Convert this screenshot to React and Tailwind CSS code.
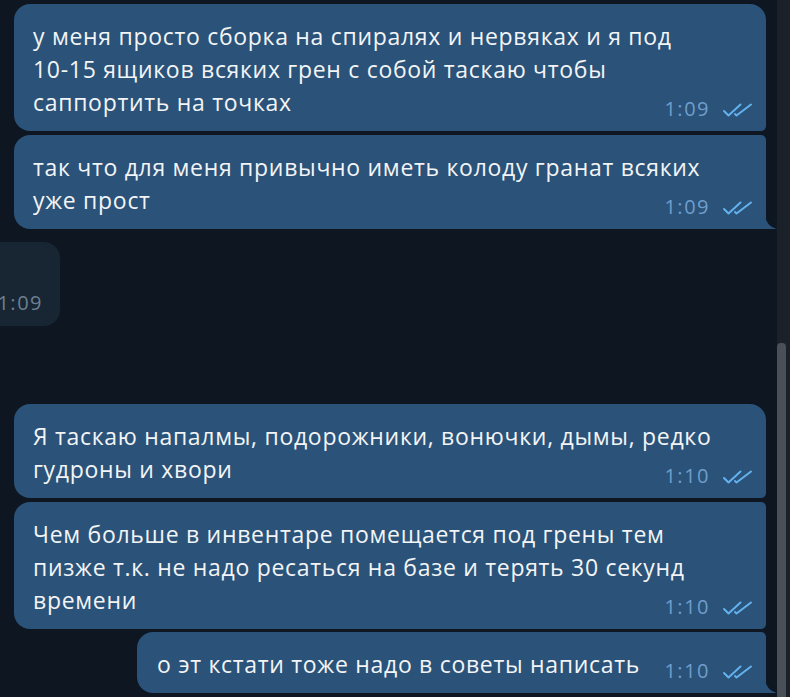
import React from "react";

function Checks() {
  return (
    <svg width="31" height="14" viewBox="0 0 31 14" fill="none" stroke="#62b2ef" strokeWidth="2" strokeLinecap="round" strokeLinejoin="round">
      <path d="M2 8 L6.5 12.5 L18.5 1.5" />
      <path d="M13 11 L14.5 12.5 L29 1.5" />
    </svg>
  );
}

function Time({ t }) {
  return (
    <div className="flex items-center shrink-0 h-[20px] ml-3">
      <span className="text-[20px] leading-[20px] tracking-[1.5px] text-[#6f9ecd]">{t}</span>
      <span className="ml-[12px] mt-[2px]">
        <Checks />
      </span>
    </div>
  );
}

function Out({ lines, time, className = "" }) {
  return (
    <div className={"bg-[#2b5278] pt-[16px] pb-[12px] pl-[19px] pr-[13px] flex items-end justify-between min-w-0 " + className}>
      <div className="flex-1 min-w-0 text-[23px] leading-[33px] tracking-[0.7px] text-[#f2f4f6] whitespace-nowrap">
        {lines.map((l, i) => (
          <div key={i}>{l}</div>
        ))}
      </div>
      <Time t={time} />
    </div>
  );
}

export default function App() {
  return (
    <div className="w-[790px] h-[697px] bg-[#0e1621] flex overflow-hidden" style={{ fontFamily: '"Open Sans", "Noto Sans", sans-serif' }}>
      <div className="flex-1 min-w-0 flex flex-col pt-[4px]">
        <Out
          className="ml-[14px] mr-[11px] rounded-[16px] rounded-br-[5px]"
          lines={[
            "у меня просто сборка на спиралях и нервяках и я под",
            "10-15 ящиков всяких грен с собой таскаю чтобы",
            "саппортить на точках",
          ]}
          time="1:09"
        />
        <div className="relative mt-[4px] ml-[14px] mr-[11px]">
          <Out
            className="rounded-[16px] rounded-tr-[5px] rounded-br-none"
            lines={["так что для меня привычно иметь колоду гранат всяких", "уже прост"]}
            time="1:09"
          />
          <svg className="absolute right-[-11px] bottom-0" width="12" height="16" viewBox="0 0 12 16">
            <path d="M0 0 C0 8 4 14 12 16 L0 16 Z" fill="#2b5278" />
          </svg>
        </div>

        <div className="mt-[13px] w-[60px] h-[84px] bg-[#182533] rounded-r-[16px] flex items-end justify-end pb-[13px] pr-[17px]">
          <span className="text-[20px] leading-[20px] tracking-[1.5px] text-[#6d7f8f] whitespace-nowrap">1:09</span>
        </div>

        <Out
          className="mt-[78px] ml-[14px] mr-[11px] rounded-[16px] rounded-br-[5px]"
          lines={["Я таскаю напалмы, подорожники, вонючки, дымы, редко", "гудроны и хвори"]}
          time="1:10"
        />
        <Out
          className="mt-[4px] ml-[14px] mr-[11px] rounded-[16px] rounded-r-[5px] rounded-l-[16px]"
          lines={[
            "Чем больше в инвентаре помещается под грены тем",
            "пизже т.к. не надо ресаться на базе и терять 30 секунд",
            "времени",
          ]}
          time="1:10"
        />
        <div className="relative mt-[3px] ml-[137px] mr-[11px]">
          <Out
            className="rounded-[16px] rounded-tr-[5px] rounded-br-none pl-[20px]"
            lines={["о эт кстати тоже надо в советы написать"]}
            time="1:10"
          />
          <svg className="absolute right-[-11px] bottom-0" width="12" height="16" viewBox="0 0 12 16">
            <path d="M0 0 C0 8 4 14 12 16 L0 16 Z" fill="#2b5278" />
          </svg>
        </div>
      </div>
      <div className="w-[13px] shrink-0 bg-[#1a2129] flex flex-col pt-[343px]">
        <div className="w-[9px] flex-1 bg-[#4a5058] rounded-t-[4px]" />
      </div>
    </div>
  );
}
